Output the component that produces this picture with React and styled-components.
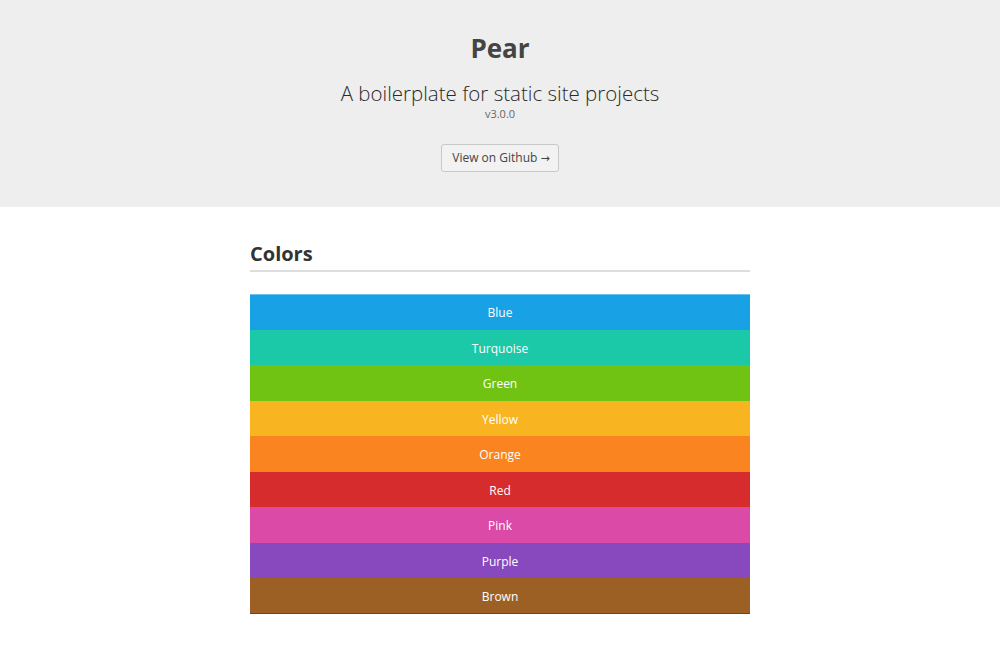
import styled, { createGlobalStyle } from "styled-components";

const GlobalStyle = createGlobalStyle`
  body {
    margin: 0;
    background: #fff;
    font-family: "Open Sans", "Noto Sans", sans-serif;
    color: #444;
  }
`;

const colors = [
  { name: "Blue", value: "#19a1e5" },
  { name: "Turquoise", value: "#1bc9a8" },
  { name: "Green", value: "#70c213" },
  { name: "Yellow", value: "#f9b422" },
  { name: "Orange", value: "#f98420" },
  { name: "Red", value: "#d72c2d" },
  { name: "Pink", value: "#dc4aa7" },
  { name: "Purple", value: "#8749bd" },
  { name: "Brown", value: "#9d6024" },
];

const Hero = styled.header`
  background: #eeeeee;
  text-align: center;
  padding: 30px 0 35px;
`;

const Title = styled.h1`
  margin: 0;
  font-size: 26px;
  line-height: 36px;
  font-weight: 700;
  color: #444;
`;

const Tagline = styled.p`
  margin: 15px 0 0;
  font-size: 20.5px;
  line-height: 24px;
  font-weight: 300;
  color: #2a2a2a;
`;

const Version = styled.small`
  display: block;
  margin-top: 3px;
  font-size: 11px;
  line-height: 12px;
  color: #666;
`;

const Button = styled.a`
  display: inline-block;
  margin-top: 24px;
  padding: 0 8px 0 10px;
  height: 28px;
  line-height: 26px;
  box-sizing: border-box;
  border: 1px solid #c8c8c8;
  border-radius: 3px;
  background: #f2f2f2;
  font-size: 12px;
  color: #444;
  text-decoration: none;
`;

const Arrow = styled.span`
  font-family: "DejaVu Sans", sans-serif;
  font-size: 11px;
`;

const Main = styled.main`
  width: 500px;
  margin: 0 auto;
  padding-top: 33px;
`;

const SectionTitle = styled.h2`
  margin: 0;
  padding-bottom: 2px;
  font-size: 20px;
  line-height: 28px;
  font-weight: 700;
  color: #333;
  border-bottom: 2px solid #dddddd;
`;

const Swatches = styled.ul`
  list-style: none;
  margin: 22px 0 0;
  padding: 0;
`;

const Swatch = styled.li`
  background: ${(p) => p.color};
  color: #fff;
  text-align: center;
  font-size: 12px;
  line-height: 19.5px;
  padding: 9px 0 7px;

  &:first-child {
    box-shadow: inset 0 1px rgba(255, 255, 255, 0.35);
  }

  &:last-child {
    box-shadow: inset 0 -1px rgba(120, 40, 0, 0.6);
  }
`;

const App = () => {
  return (
    <>
      <GlobalStyle />
      <Hero>
        <Title>Pear</Title>
        <Tagline>A boilerplate for static site projects</Tagline>
        <Version>v3.0.0</Version>
        <Button href="#">
          View on Github <Arrow>→</Arrow>
        </Button>
      </Hero>
      <Main>
        <SectionTitle>Colors</SectionTitle>
        <Swatches>
          {colors.map((c) => (
            <Swatch key={c.name} color={c.value}>
              {c.name}
            </Swatch>
          ))}
        </Swatches>
      </Main>
    </>
  );
};

export default App;
